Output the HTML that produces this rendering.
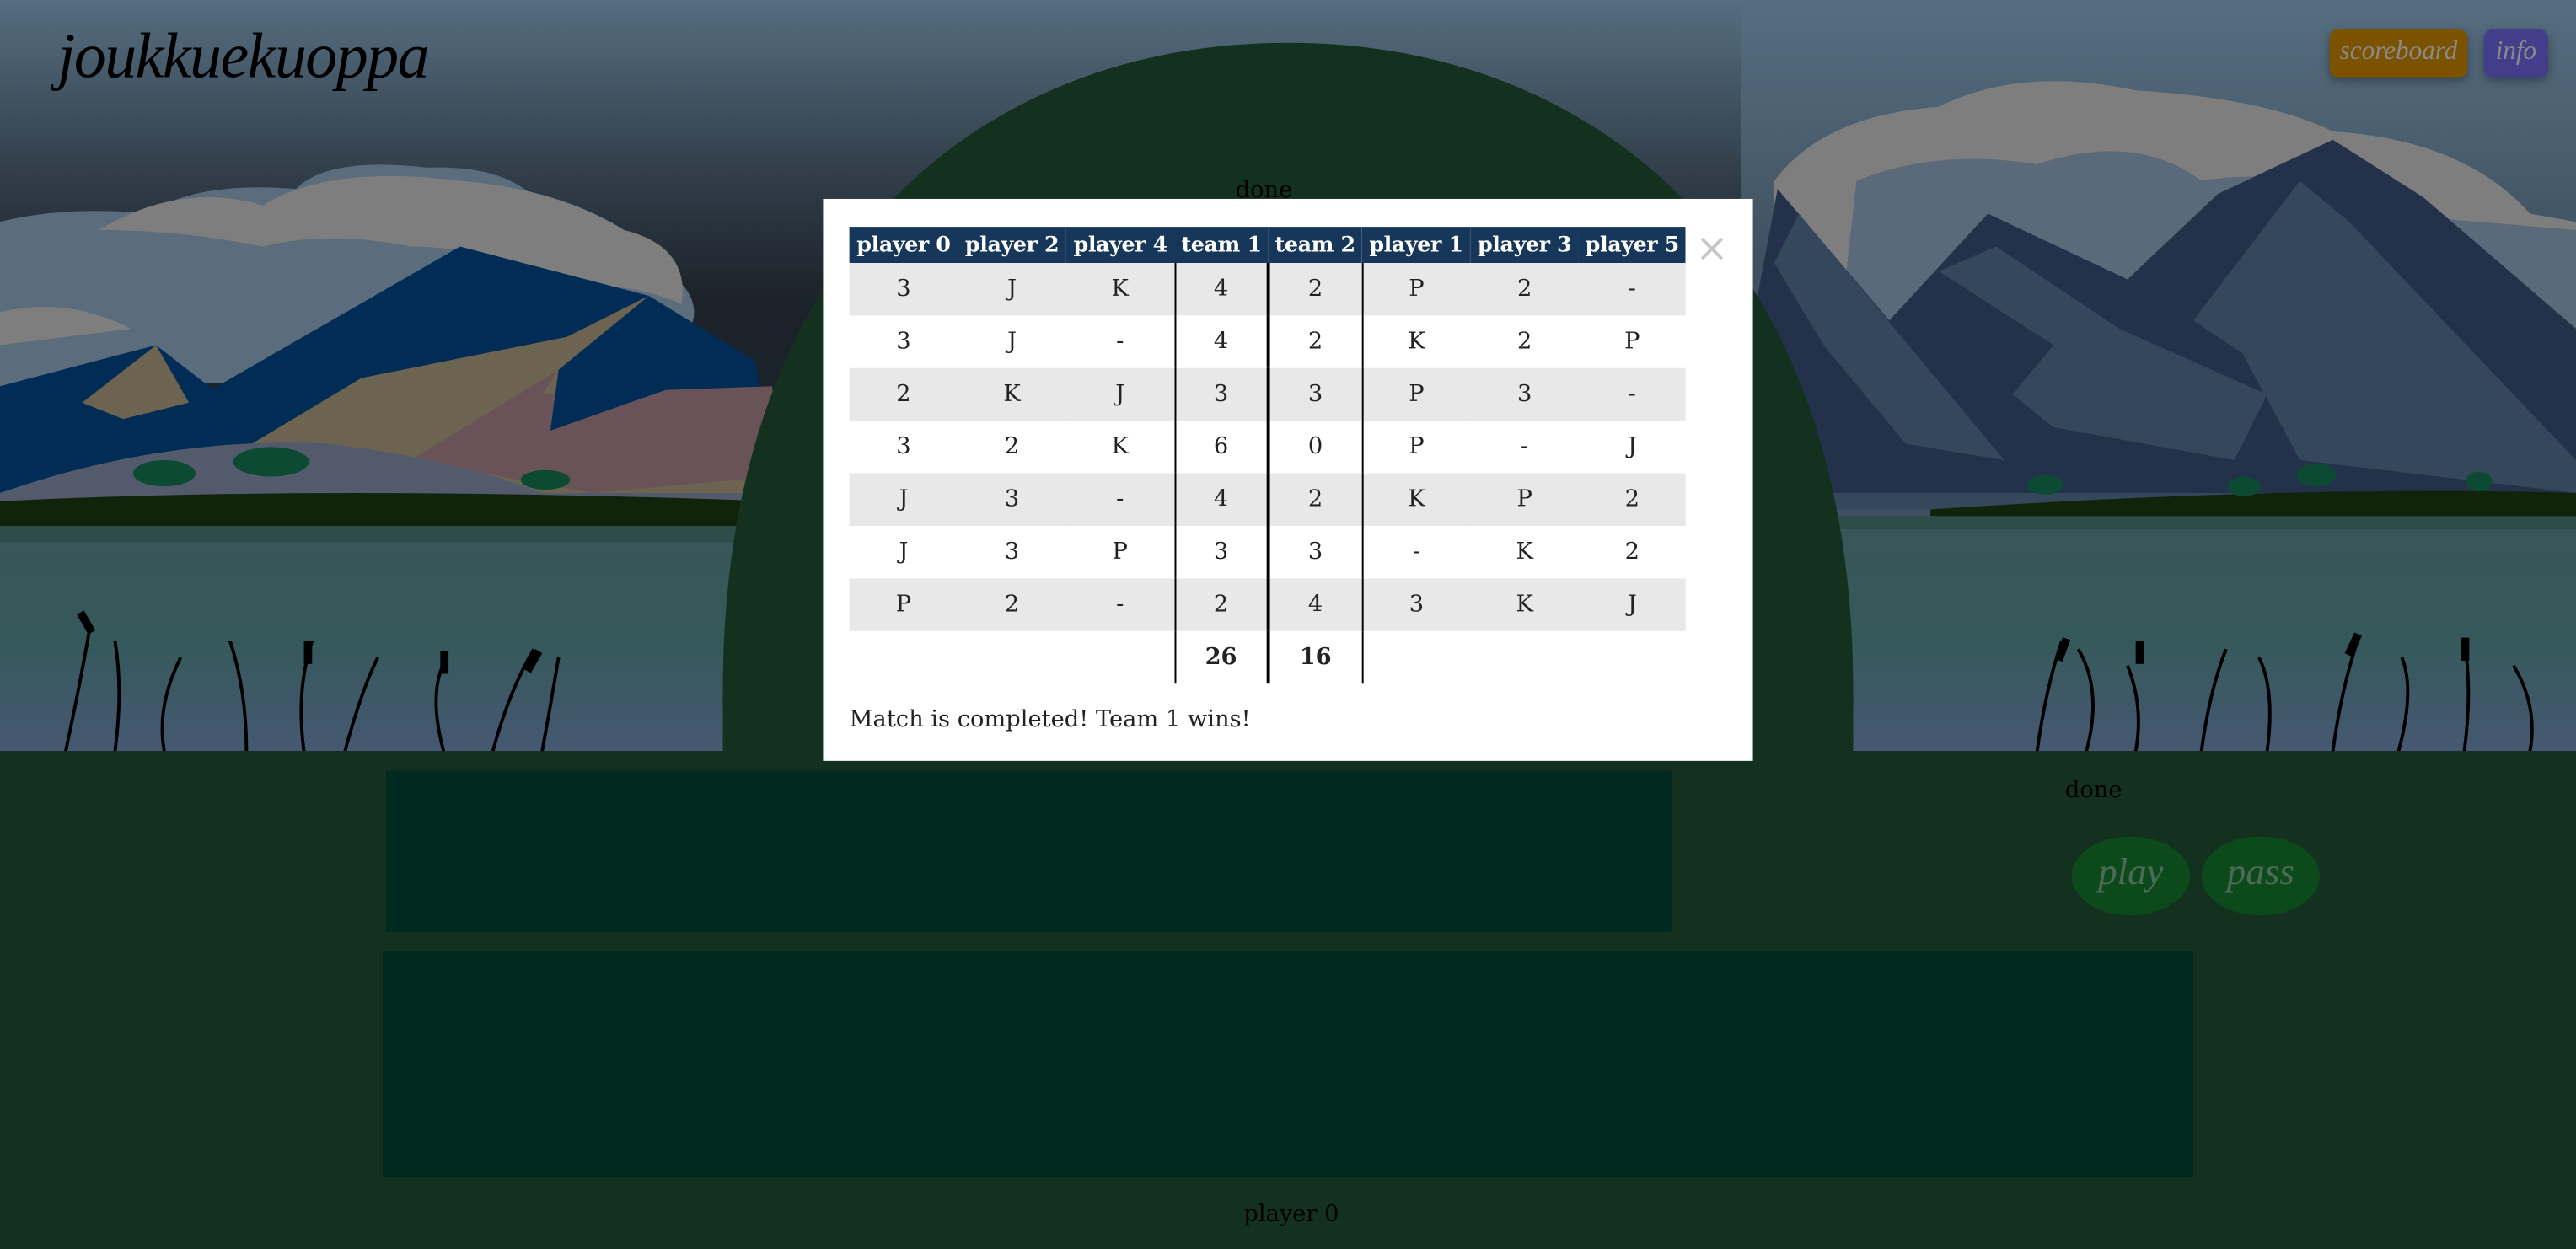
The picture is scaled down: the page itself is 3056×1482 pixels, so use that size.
<!DOCTYPE html>
<html><head><meta charset="utf-8"><style>
html,body{margin:0;padding:0;width:3056px;height:1482px;overflow:hidden;background:#14301f}
#s{position:absolute;left:0;top:0;width:1568px;height:760px;transform:scale(1.94898,1.95);transform-origin:0 0;font-family:"DejaVu Serif","Liberation Serif",serif}
.abs{position:absolute}
.title{left:35px;top:12px;font-family:"Liberation Serif",serif;font-style:italic;font-size:39px;color:#000;letter-spacing:-0.8px}
.btn{top:18px;height:29px;border-radius:5px;font-family:"Liberation Serif",serif;font-style:italic;font-size:16px;color:#8a8a8a;text-align:center;line-height:28px;box-shadow:0 2px 6px rgba(0,0,0,.35)}
.panel{background:#002a20}
.modal{left:501px;top:121px;width:566px;height:342px;background:#fff}
table{position:absolute;left:16px;top:17px;border-collapse:collapse;font-size:14px;table-layout:fixed;width:509px}
th{background:#16365a;color:#fff;font-weight:bold;height:22px;padding:0;font-size:13px;white-space:nowrap;letter-spacing:-0.2px;overflow:hidden}
td{height:32px;text-align:center;color:#222;padding:0}
tr.g td{background:#e8e8e8}
.l1{border-left:1px solid #000}.l2{border-left:2px solid #000}.l3{border-left:1px solid #000}
.oval{width:72px;height:48px;border-radius:50%;background:#0c4a1c;color:#4d6a55;font-family:"Liberation Serif",serif;font-style:italic;font-size:23px;text-align:center;line-height:44px;top:509px}
</style></head><body><div id="s">
<svg class="abs" style="left:0;top:0" width="1568" height="760" viewBox="0 0 1568 760">
<defs>
<linearGradient id="sky" x1="0" y1="0" x2="0" y2="1"><stop offset="0" stop-color="#566e80"/><stop offset=".25" stop-color="#2e3a45"/><stop offset=".4" stop-color="#1c2229"/><stop offset="1" stop-color="#1c2229"/></linearGradient>
<linearGradient id="sky2" x1="0" y1="0" x2="0" y2="1"><stop offset="0" stop-color="#566e80"/><stop offset=".5" stop-color="#3f5160"/><stop offset="1" stop-color="#3f5160"/></linearGradient>
<linearGradient id="wat" x1="0" y1="0" x2="0" y2="1"><stop offset="0" stop-color="#3a5558"/><stop offset=".5" stop-color="#35595a"/><stop offset="1" stop-color="#465872"/></linearGradient>
</defs>
<rect width="1568" height="460" fill="url(#sky)"/>
<rect x="1060" y="0" width="508" height="320" fill="url(#sky2)"/>
<path d="M0 135 Q40 125 90 130 Q120 110 180 115 Q200 95 260 102 Q310 100 330 125 Q370 130 400 160 Q430 180 420 200 L380 220 L0 240Z" fill="#5b6c7c"/>
<path d="M60 140 Q110 110 160 125 Q200 100 280 110 Q340 115 380 140 Q420 150 415 185 Q380 170 340 175 Q300 150 250 150 Q200 140 160 150 Q110 140 60 140Z" fill="#7e7e7e"/>
<path d="M0 190 Q40 180 80 200 L0 210Z" fill="#7e7e7e"/>
<polygon points="0,235 95,210 140,245 0,300" fill="#002c55"/>
<polygon points="50,245 95,210 115,245 75,255" fill="#6c6450"/>
<polygon points="0,300 115,245 280,150 395,180 460,220 470,280 200,300 0,320" fill="#002c55"/>
<polygon points="120,290 220,230 345,205 395,180 335,260 470,235 475,300 300,310" fill="#6c6450"/>
<polygon points="250,280 340,225 330,240 470,235 470,290 360,300" fill="#6a5358"/>
<polygon points="340,225 395,180 440,225 335,262" fill="#002c55"/>
<path d="M0 300 Q100 265 200 270 Q280 280 330 300 L470 300 L470 320 L0 320Z" fill="#535a6c"/>
<path d="M0 305 Q200 295 470 305 L470 325 L0 325Z" fill="#10240c"/>
<path d="M1080 110 Q1110 70 1180 65 Q1230 40 1300 55 Q1380 60 1420 80 Q1500 85 1540 130 L1568 135 L1568 200 L1080 200Z" fill="#7e7e7e"/>
<path d="M1130 110 Q1180 90 1240 100 Q1300 80 1340 110 Q1400 100 1450 130 L1568 140 L1568 200 L1120 200Z" fill="#5a6a7a"/>
<polygon points="1068,190 1082,115 1150,195 1210,130 1295,170 1350,118 1420,85 1475,120 1568,200 1568,300 1068,300" fill="#23324a"/>
<polygon points="1080,160 1095,130 1220,280 1160,270 1110,210" fill="#35475a"/>
<polygon points="1180,165 1215,150 1290,200 1380,240 1360,280 1250,260 1225,240 1250,210" fill="#35475a"/>
<polygon points="1335,195 1400,110 1430,135 1568,280 1568,300 1400,280 1365,215" fill="#35475a"/>
<polygon points="1068,300 1568,300 1568,310 1068,310" fill="#35475a"/>
<path d="M1175 310 Q1400 295 1568 300 L1568 318 L1175 314Z" fill="#10240c"/>
<rect x="0" y="320" width="1568" height="137" fill="url(#wat)"/>
<rect x="0" y="320" width="470" height="10" fill="#2f4c4a"/>
<rect x="1100" y="314" width="468" height="8" fill="#2f4c4a"/>
<g fill="#0d4a34"><ellipse cx="100" cy="288" rx="19" ry="8"/><ellipse cx="165" cy="281" rx="23" ry="9"/><ellipse cx="332" cy="292" rx="15" ry="6"/><ellipse cx="1245" cy="295" rx="11" ry="6"/><ellipse cx="1366" cy="296" rx="10" ry="6"/><ellipse cx="1410" cy="289" rx="12" ry="7"/><ellipse cx="1509" cy="293" rx="8" ry="6"/></g>
<g stroke="#000" stroke-width="2" fill="none">
<path d="M40 457 Q50 410 55 380 M70 457 Q75 420 70 390 M100 457 Q95 430 110 400 M150 457 Q150 420 140 390 M185 457 Q180 420 190 390 M210 457 Q220 420 230 400 M270 457 Q260 420 272 400 M300 457 Q310 420 325 395 M330 457 Q335 430 340 400"/>
<path d="M1240 457 Q1245 420 1255 390 M1270 457 Q1280 420 1265 395 M1300 457 Q1305 430 1295 405 M1340 457 Q1345 420 1355 395 M1380 457 Q1385 420 1375 400 M1420 457 Q1425 420 1435 390 M1460 457 Q1470 420 1462 400 M1500 457 Q1505 420 1500 390 M1540 457 Q1545 430 1530 405"/>
</g>
<g fill="#000"><rect x="50" y="372" width="5" height="14" transform="rotate(-30 52 379)"/><rect x="185" y="390" width="5" height="14"/><rect x="268" y="396" width="5" height="14"/><rect x="322" y="395" width="5" height="14" transform="rotate(30 324 402)"/><rect x="1253" y="388" width="5" height="14" transform="rotate(20 1255 395)"/><rect x="1300" y="390" width="5" height="14"/><rect x="1430" y="385" width="5" height="14" transform="rotate(25 1432 392)"/><rect x="1498" y="388" width="5" height="14"/></g>
<rect x="0" y="457" width="1568" height="303" fill="#14301f"/>
<path d="M440 457 L440 420 C440 150 600 26 784 26 C968 26 1128 150 1128 420 L1128 457Z" fill="#14301f"/>
</svg>
<div class="abs title">joukkuekuoppa</div>
<div class="abs btn" style="left:1418px;width:84px;background:#7a5200">scoreboard</div>
<div class="abs btn" style="left:1512px;width:39px;background:#423e8c">info</div>
<div class="abs" style="left:752px;top:108px;font-size:14px;color:#000">done</div>
<div class="abs panel" style="left:235px;top:469px;width:783px;height:98px"></div>
<div class="abs panel" style="left:233px;top:579px;width:1102px;height:137px"></div>
<div class="abs" style="left:757px;top:731px;font-size:14px;color:#000">player 0</div>
<div class="abs" style="left:1257px;top:473px;font-size:14px;color:#000">done</div>
<div class="abs oval" style="left:1261px">play</div>
<div class="abs oval" style="left:1340px">pass</div>
<div class="abs modal">
<table>
<colgroup><col style="width:66px"><col style="width:66px"><col style="width:66px"><col style="width:57px"><col style="width:57px"><col style="width:66px"><col style="width:66px"><col style="width:65px"></colgroup>
<tr><th>player 0</th><th>player 2</th><th>player 4</th><th>team 1</th><th>team 2</th><th>player 1</th><th>player 3</th><th>player 5</th></tr>
<tr class="g"><td>3</td><td>J</td><td>K</td><td class="l1">4</td><td class="l2">2</td><td class="l3">P</td><td>2</td><td>-</td></tr>
<tr><td>3</td><td>J</td><td>-</td><td class="l1">4</td><td class="l2">2</td><td class="l3">K</td><td>2</td><td>P</td></tr>
<tr class="g"><td>2</td><td>K</td><td>J</td><td class="l1">3</td><td class="l2">3</td><td class="l3">P</td><td>3</td><td>-</td></tr>
<tr><td>3</td><td>2</td><td>K</td><td class="l1">6</td><td class="l2">0</td><td class="l3">P</td><td>-</td><td>J</td></tr>
<tr class="g"><td>J</td><td>3</td><td>-</td><td class="l1">4</td><td class="l2">2</td><td class="l3">K</td><td>P</td><td>2</td></tr>
<tr><td>J</td><td>3</td><td>P</td><td class="l1">3</td><td class="l2">3</td><td class="l3">-</td><td>K</td><td>2</td></tr>
<tr class="g"><td>P</td><td>2</td><td>-</td><td class="l1">2</td><td class="l2">4</td><td class="l3">3</td><td>K</td><td>J</td></tr>
<tr><td></td><td></td><td></td><td class="l1"><b>26</b></td><td class="l2"><b>16</b></td><td class="l3"></td><td></td><td></td></tr>
</table>
<div class="abs" style="left:531px;top:16px;font-size:24px;color:#c8c8c8;font-family:'DejaVu Sans',sans-serif">×</div>
<div class="abs" style="left:16px;top:309px;font-size:14px;color:#222">Match is completed! Team 1 wins!</div>
</div>
</div></body></html>
